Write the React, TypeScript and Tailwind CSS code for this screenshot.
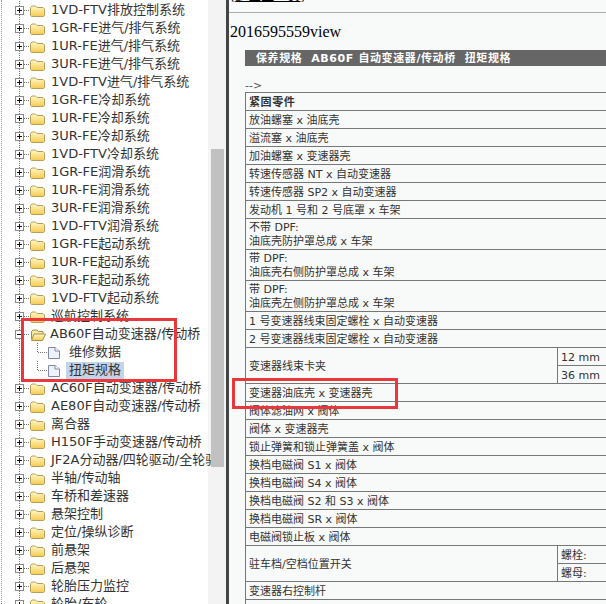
const zh = { fontFamily: '"DejaVu Sans", "Noto Sans CJK SC", sans-serif' };

type Row = { label: string; kind?: 'closed' | 'open' | 'doc'; selected?: boolean };

const treeRows: Row[] = [
  { label: '1VD-FTV排放控制系统' },
  { label: '1GR-FE进气/排气系统' },
  { label: '1UR-FE进气/排气系统' },
  { label: '3UR-FE进气/排气系统' },
  { label: '1VD-FTV进气/排气系统' },
  { label: '1GR-FE冷却系统' },
  { label: '1UR-FE冷却系统' },
  { label: '3UR-FE冷却系统' },
  { label: '1VD-FTV冷却系统' },
  { label: '1GR-FE润滑系统' },
  { label: '1UR-FE润滑系统' },
  { label: '3UR-FE润滑系统' },
  { label: '1VD-FTV润滑系统' },
  { label: '1GR-FE起动系统' },
  { label: '1UR-FE起动系统' },
  { label: '3UR-FE起动系统' },
  { label: '1VD-FTV起动系统' },
  { label: '巡航控制系统' },
  { label: 'AB60F自动变速器/传动桥', kind: 'open' },
  { label: '维修数据', kind: 'doc' },
  { label: '扭矩规格', kind: 'doc', selected: true },
  { label: 'AC60F自动变速器/传动桥' },
  { label: 'AE80F自动变速器/传动桥' },
  { label: '离合器' },
  { label: 'H150F手动变速器/传动桥' },
  { label: 'JF2A分动器/四轮驱动/全轮驱动' },
  { label: '半轴/传动轴' },
  { label: '车桥和差速器' },
  { label: '悬架控制' },
  { label: '定位/操纵诊断' },
  { label: '前悬架' },
  { label: '后悬架' },
  { label: '轮胎压力监控' },
  { label: '轮胎/车轮' },
];

const tableRows: (string | string[])[] = [
  '放油螺塞 x 油底壳',
  '溢流塞 x 油底壳',
  '加油螺塞 x 变速器壳',
  '转速传感器 NT x 自动变速器',
  '转速传感器 SP2 x 自动变速器',
  '发动机 1 号和 2 号底罩 x 车架',
  ['不带 DPF:', '油底壳防护罩总成 x 车架'],
  ['带 DPF:', '油底壳右侧防护罩总成 x 车架'],
  ['带 DPF:', '油底壳左侧防护罩总成 x 车架'],
  '1 号变速器线束固定螺栓 x 自动变速器',
  '2 号变速器线束固定螺栓 x 自动变速器',
];

const tableRows2 = [
  '变速器油底壳 x 变速器壳',
  '阀体滤油网 x 阀体',
  '阀体 x 变速器壳',
  '锁止弹簧和锁止弹簧盖 x 阀体',
  '换档电磁阀 S1 x 阀体',
  '换档电磁阀 S4 x 阀体',
  '换档电磁阀 S2 和 S3 x 阀体',
  '换档电磁阀 SR x 阀体',
  '电磁阀锁止板 x 阀体',
];

function Toggle({ open }: { open: boolean }) {
  return (
    <svg width="30" height="18" viewBox="0 0 30 18" className="shrink-0">
      <path d="M19.5 0V18" stroke="#777" strokeDasharray="1 1" />
      <path d="M24 9.5H30" stroke="#777" strokeDasharray="1 1" />
      <rect x="15.5" y="5.5" width="8" height="8" fill="#fff" stroke="#8a8a8a" />
      <path d="M17 9.5H22" stroke="#111" />
      {!open && <path d="M19.5 7V12" stroke="#111" />}
    </svg>
  );
}

function Folder({ open }: { open: boolean }) {
  return (
    <svg width="16" height="14" viewBox="0 0 16 14" className="shrink-0">
      <defs>
        <linearGradient id="folderFill" x1="0" y1="0" x2="0" y2="1">
          <stop offset="0" stopColor="#fff8c8" />
          <stop offset="1" stopColor="#f5cb4e" />
        </linearGradient>
      </defs>
      {open ? (
        <>
          <path d="M1.5 12V4.5L3 3H7L8.5 4.5H13V7" fill="#f7e9a8" stroke="#a98f45" />
          <path d="M1.5 13.5L4 7H15.5L12.5 13.5Z" fill="url(#folderFill)" stroke="#a98f45" />
        </>
      ) : (
        <path d="M.5 4.5L2 3H5.5L7 4.5H13L14.5 6V12.5L13.5 13.5H1.5L.5 12.5Z" fill="url(#folderFill)" stroke="#b8a05c" />
      )}
    </svg>
  );
}

function Doc() {
  return (
    <svg width="61" height="18" viewBox="0 0 61 18" className="shrink-0">
      <path d="M19.5 0V18" stroke="#777" strokeDasharray="1 1" />
      <path d="M37.5 0V9.5H48" stroke="#777" strokeDasharray="1 1" fill="none" />
      <path d="M48.5 4.5H55L59.5 8V15.5H48.5Z" fill="#eef2fb" stroke="#7d88ad" />
      <path d="M55 4.5V8H59.5" fill="#fff" stroke="#7d88ad" />
    </svg>
  );
}

function TreeItem({ row }: { row: Row }) {
  const kind = row.kind ?? 'closed';
  return (
    <div className="flex h-[18px] items-center whitespace-nowrap text-[13px] leading-[18px] text-[#333]">
      {kind === 'doc' ? (
        <>
          <Doc />
          <span className={`ml-[5px] h-[17px] px-[3px] leading-[16px] ${row.selected ? 'bg-[#c3d3e8]' : ''}`}>{row.label}</span>
        </>
      ) : (
        <>
          <Toggle open={kind === 'open'} />
          <Folder open={kind === 'open'} />
          <span className={kind === 'open' ? 'ml-[4px]' : 'ml-[5px]'}>{row.label}</span>
        </>
      )}
    </div>
  );
}

function Cell({ children, className = '' }: { children: React.ReactNode; className?: string }) {
  return <div className={`flex items-center px-[3px] pt-[2px] text-[11px] leading-[14px] text-[#333] ${className}`}>{children}</div>;
}

export default function App() {
  return (
    <div className="relative flex h-[604px] w-[606px] overflow-hidden bg-white" style={zh}>
      {/* tree pane */}
      <div className="relative z-10 ml-px w-[210px] shrink-0 overflow-hidden border-l border-dotted border-l-[#999] pt-px">
        <div className="-ml-[2px]">
          {treeRows.map((row) => (
            <TreeItem key={row.label} row={row} />
          ))}
        </div>
      </div>

      {/* scrollbar */}
      <div className="-ml-[3px] w-[17px] shrink-0 bg-[#f3f3f3] pt-[149px] pl-[3px]">
        <div className="h-[318px] w-[13px] bg-[#c1c1c1]" />
      </div>

      <div className="w-px shrink-0 bg-[#f3f3f3]" />
      <div className="w-[3px] shrink-0 bg-[#444]" />

      {/* right pane */}
      <div className="min-w-0 flex-1 overflow-hidden bg-[#f8f9f9]">
        <div className="-mt-[12px] h-[24px] pl-[2px] text-[13px] leading-[15px] text-black" style={{ fontFamily: '"Liberation Serif", "Noto Sans CJK SC", serif' }}>
          [<span className="underline">返回上一页</span>]
        </div>
        <div className="h-px bg-[#aaa]" />
        <div className="mt-[9px] pl-px text-[16px] leading-[19px] text-black" style={{ fontFamily: '"Liberation Serif", serif' }}>
          2016595559view
        </div>

        <div className="ml-[16px] w-[400px]">
          <div className="mt-[9px] flex h-[16px] items-center bg-[#666] pt-[2px] pl-[11px] text-[11px] font-bold tracking-[.6px] whitespace-nowrap text-white">
            保养规格&nbsp;&nbsp;AB60F 自动变速器/传动桥&nbsp;&nbsp;扭矩规格
          </div>
          <div className="mt-[14px] h-[12px] text-[11px] leading-[12px] text-[#555]">--&gt;</div>

          <div className="border-t border-l border-[#777]">
            <Cell className="h-[18px] border-b border-[#777] font-bold tracking-[.6px]">紧固零件</Cell>
            {tableRows.map((row) =>
              Array.isArray(row) ? (
                <Cell key={row[1]} className="h-[31px] border-b border-[#777]">
                  <div>
                    {row.map((line) => (
                      <div key={line}>{line}</div>
                    ))}
                  </div>
                </Cell>
              ) : (
                <Cell key={row} className="h-[18px] border-b border-[#777]">{row}</Cell>
              ),
            )}
            <div className="flex h-[36px] border-b border-[#777]">
              <Cell className="w-[312px] shrink-0 border-r border-[#777]">变速器线束卡夹</Cell>
              <div className="flex-1">
                <Cell className="h-[18px] border-b border-[#777]">12 mm</Cell>
                <Cell className="h-[17px]">36 mm</Cell>
              </div>
            </div>
            {tableRows2.map((row) => (
              <Cell key={row} className="h-[18px] border-b border-[#777]">{row}</Cell>
            ))}
            <div className="flex h-[36px] border-b border-[#777]">
              <Cell className="w-[312px] shrink-0 border-r border-[#777]">驻车档/空档位置开关</Cell>
              <div className="flex-1">
                <Cell className="h-[18px] border-b border-[#777]">螺栓:</Cell>
                <Cell className="h-[17px]">螺母:</Cell>
              </div>
            </div>
            <Cell className="h-[18px] border-b border-[#777]">变速器右控制杆</Cell>
            <Cell className="h-[18px]">&nbsp;</Cell>
          </div>
        </div>
      </div>

      {/* red annotation boxes */}
      <div className="absolute top-[318px] left-[21px] z-20 h-[64px] w-[156px] border-[3px] border-[#e8383d]" />
      <div className="absolute top-[378px] left-[232px] z-20 h-[31px] w-[166px] border-[3px] border-[#e8383d]" />
    </div>
  );
}
